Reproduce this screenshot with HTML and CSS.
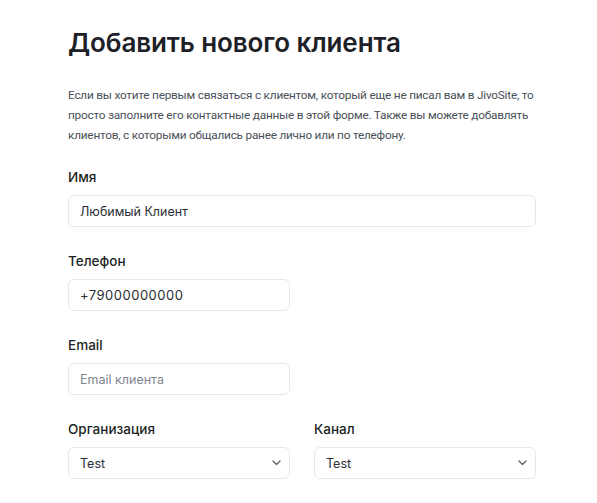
FILE: index.html
```html
<!DOCTYPE html>
<html lang="ru">
<head>
  <meta charset="UTF-8" />
  <meta name="viewport" content="width=device-width, initial-scale=1.0"/>
  <title>Добавить нового клиента</title>
  <link rel="stylesheet" href="styles.css">
</head>
<body>

  <main class="page">
    <h1>Добавить нового клиента</h1>
    <p class="intro">Если вы хотите первым связаться с клиентом, который еще не писал вам в JivoSite, то просто заполните его контактные данные в этой форме. Также вы можете добавлять клиентов, с которыми общались ранее лично или по телефону.</p>

    <form class="client-form">
      <div class="field">
        <label for="name">Имя</label>
        <input id="name" type="text" value="Любимый Клиент">
      </div>

      <div class="field half">
        <label for="phone">Телефон</label>
        <input id="phone" class="phone-input" type="text" value="+79000000000">
      </div>

      <div class="field half">
        <label for="email">Email</label>
        <input id="email" type="text" placeholder="Email клиента">
      </div>

      <div class="row">
        <div class="field">
          <label>Организация</label>
          <div class="select">
            <span>Test</span>
            <svg width="9" height="6" viewBox="0 0 9 6"><path d="M1 1l3.5 3.5L8 1" fill="none" stroke="#5d636b" stroke-width="1.4" stroke-linecap="round" stroke-linejoin="round"/></svg>
          </div>
        </div>
        <div class="field">
          <label>Канал</label>
          <div class="select">
            <span>Test</span>
            <svg width="9" height="6" viewBox="0 0 9 6"><path d="M1 1l3.5 3.5L8 1" fill="none" stroke="#5d636b" stroke-width="1.4" stroke-linecap="round" stroke-linejoin="round"/></svg>
          </div>
        </div>
      </div>
    </form>
  </main>

</body>
</html>
```

FILE: styles.css
```css
body {
  margin: 0;
  padding: 0;
  background-color: #fff;
  font-family: Inter, "Noto Sans", sans-serif;
  color: #1c1f24;
}

.page {
  width: 468px;
  padding: 28px 0 0 68px;
}

h1 {
  margin: 0;
  font-size: 26px;
  font-weight: 600;
  line-height: 30px;
  letter-spacing: -0.1px;
  color: #1d2127;
}

.intro {
  margin: 27px 0 22px;
  font-family: Roboto, Inter, sans-serif;
  font-size: 11.8px;
  line-height: 20px;
  letter-spacing: -0.22px;
  color: #4a5058;
}

.field {
  display: flex;
  flex-direction: column;
  margin-bottom: 24px;
}

.field.half {
  width: 222px;
}

.field label {
  font-size: 13.5px;
  font-weight: 500;
  line-height: 20px;
  margin-bottom: 8px;
  color: #1c1f24;
}

.field input,
.select {
  box-sizing: border-box;
  height: 32px;
  padding: 0 11px;
  border: 1px solid #e6e8eb;
  border-radius: 6px;
  font-family: inherit;
  font-size: 12.5px;
  color: #2a2e34;
  background: #fff;
  outline: none;
}

.field .phone-input {
  font-size: 13px;
  letter-spacing: 0.5px;
}

.field input::placeholder {
  color: #80868e;
}

.row {
  display: grid;
  grid-template-columns: 222px 222px;
  column-gap: 24px;
}

.select {
  display: flex;
  align-items: center;
  justify-content: space-between;
  padding-right: 8px;
}
```
